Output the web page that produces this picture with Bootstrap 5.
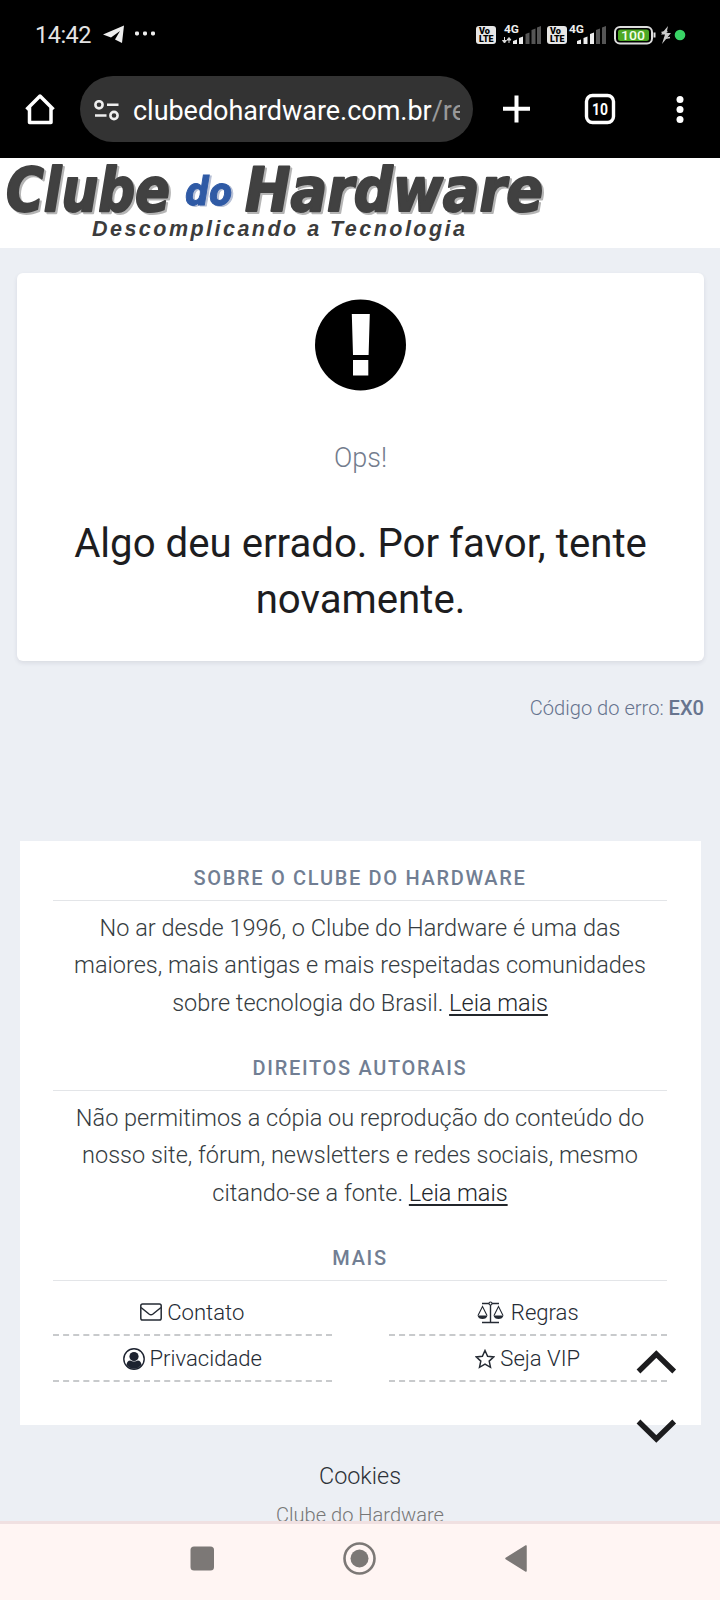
<!DOCTYPE html>
<html lang="pt-BR">
<head>
<meta charset="utf-8">
<meta name="viewport" content="width=device-width, initial-scale=1">
<title>Clube do Hardware</title>
<link href="https://cdn.jsdelivr.net/npm/bootstrap@5.3.0/dist/css/bootstrap.min.css" rel="stylesheet">
<style>
body{font-family:Roboto,"Liberation Sans",sans-serif;background:#eceff4;width:720px;height:1600px;overflow:hidden;color:#353c41}
svg{display:block;flex:none}
.chrome{height:158px;background:#000;color:#fff}
.status{height:68px;padding:0 33px 0 35px}
.clock{font-size:23.5px;line-height:68px;color:#e4e4e4;letter-spacing:-.5px;padding-top:1px}
.toolbar{height:84px;margin-top:-1px;padding:9px 0 9px 25px}
.omnibox{width:393px;height:66px;background:#333;border-radius:33px;margin-left:25px;padding:4px 13px 0 14px}
.address{width:327px;font-size:27px;white-space:nowrap;overflow:hidden;letter-spacing:-.03px}
.address small{font-size:inherit;color:#999}
.site-logo{height:90px}
.wordmark{filter:drop-shadow(2px 2px 0 #b5b5b5)}
.wordmark-do{filter:drop-shadow(2px 1.5px 0 #b6bfd5)}
.error-card{margin:25px 16px 0 17px;height:388px;border:0;border-radius:6px;box-shadow:0 2px 4px rgba(60,60,90,.11);padding-top:26px}
.ops{font-size:27px;line-height:36px;font-weight:300;color:#737c8d;margin-top:49px}
.message{font-size:40.2px;line-height:56px;font-weight:400;color:#1d1d1f;margin:40px 0 0;white-space:nowrap}
.code{font-size:20.1px;line-height:30px;font-weight:300;color:#66738e;margin:32px 16px 0 0}
.code b{font-weight:500;color:#68758f}
.about{margin:118px 19px 0 20px;height:584px;padding:22px 34px 0 33px}
.about h2{font-size:20px;line-height:30px;height:38px;font-weight:500;letter-spacing:1.68px;color:#717e93;border-bottom:1px solid #e3e5e8;margin:0 0 9px}
.about p{font-size:23.5px;line-height:37.3px;height:112px;font-weight:300;margin:0 0 31px;white-space:nowrap}
.about p a{color:#22262b;text-decoration-thickness:2px;text-underline-offset:3px}
.link-grid{grid-template-columns:1fr 1fr;column-gap:57px;margin-top:-1px}
.link-grid a{height:46.5px;padding-top:2px;font-size:22.1px;line-height:37px;font-weight:300;color:#252b34;border-bottom:2px dashed #c8cacc;text-decoration:none;gap:5px}
.cookies{font-size:23.4px;line-height:37px;font-weight:300;color:#2d3238;margin-top:33px}
.owner{font-size:20.1px;line-height:30px;font-weight:300;color:#777;margin-top:5px}
.scrollers{right:43px;top:1349px}
.sysnav{top:1521px;height:79px;background:#fff5f3;border-top:3px solid #f0e0e1}
</style>
</head>
<body class="position-relative">
<header class="chrome">
  <div class="status d-flex justify-content-between align-items-center">
    <div class="d-flex align-items-center">
      <span class="clock">14:42</span>
      <svg class="ms-2" width="56" height="24" viewBox="98 22 56 24"><path d="M102 34.500 123 25.500 121 43 114 39.500 119 31 110 37.500Z" fill="#eee"/><g fill="#eee"><rect x="134" y="31.500" width="4" height="4" rx="1.400"/><rect x="142" y="31.500" width="4" height="4" rx="1.400"/><rect x="150" y="31.500" width="4" height="4" rx="1.400"/></g></svg>
    </div>
    <svg width="212" height="26" viewBox="475 20 212 26" font-family="Roboto,sans-serif" font-weight="700">
      <g fill="#e6e6e6"><rect x="476" y="25" width="20" height="18" rx="3"/><rect x="547" y="25" width="20" height="18" rx="3"/></g>
      <g fill="#000" font-size="8.500" font-weight="900"><text x="479" y="33" textLength="11" lengthAdjust="spacingAndGlyphs">Vo</text><text x="479" y="41" textLength="14.500" lengthAdjust="spacingAndGlyphs">LTE</text><text x="550" y="33" textLength="11" lengthAdjust="spacingAndGlyphs">Vo</text><text x="550" y="41" textLength="14.500" lengthAdjust="spacingAndGlyphs">LTE</text></g>
      <g fill="#eee" font-size="11"><text x="504" y="31.500" textLength="15" lengthAdjust="spacingAndGlyphs">4G</text><text x="569" y="31.500" textLength="15" lengthAdjust="spacingAndGlyphs">4G</text></g>
      <path d="M504.500 36v4M502.500 39.500h4L504.500 42ZM509 37v5M507 39h4L509 36.500Z" stroke="#ddd" fill="#ddd"/>
      <g fill="#eee"><path d="M513 43v-3l4-1.500V43ZM519 43v-6l4-1.500V43ZM577 43v-3l4-1.500V43ZM583.500 43v-6l4-1.500V43ZM590 43V33l4-1.500V43Z"/></g>
      <path d="M525.500 43V33l4-1.500V43ZM531.500 43V29l4-1.500V43ZM537 43V26.500l4-1.500V43ZM596 43V29l4-1.500V43ZM602 43V26.500l4-1.500V43Z" fill="#555"/>
      <rect x="615" y="26" width="37" height="16.500" rx="5" fill="none" stroke="#ddd" stroke-width="2"/><rect x="618" y="28.500" width="31" height="11.500" rx="2.500" fill="#4ca824"/><rect x="653.500" y="31.500" width="2" height="5" fill="#ddd"/>
      <text x="621" y="39" font-size="13" fill="#f2ffe8" font-weight="500" textLength="24" lengthAdjust="spacingAndGlyphs">100</text>
      <path d="M668 25 661 33.500h4l-3 9.500 9-11h-4.500Z" fill="#ccc"/><path d="m661.500 31.500 6-1M664 37.500l6-1" stroke="#ccc" stroke-width="1.500"/>
      <circle cx="680" cy="34" r="5.300" fill="#39d465"/>
    </svg>
  </div>
  <div class="toolbar d-flex align-items-center">
    <svg width="30" height="32" viewBox="25 93.500 30 32" fill="none" stroke="#fff" stroke-width="3.500" stroke-linejoin="round"><path d="M26.500 110 40 96.500 53.500 110M29.500 107v16h21.500v-16"/></svg>
    <div class="omnibox d-flex align-items-center">
      <svg width="26" height="22" viewBox="94 100 26 22" fill="none" stroke="#eee" stroke-width="2.600"><circle cx="99" cy="104.800" r="3.600"/><path d="M107 104.800h11.500M95 115.500h11.500"/><circle cx="114" cy="115.500" r="3.600"/></svg>
      <span class="address ms-auto">clubedohardware.com.br<small>/re</small></span>
    </div>
    <svg width="200" height="40" viewBox="473 89.500 200 40"><path d="M503 109.300h27M516.500 96v27" stroke="#fff" stroke-width="4"/><rect x="586.500" y="96" width="27" height="27" rx="6" fill="none" stroke="#fff" stroke-width="3.400"/><text x="600" y="115.400" fill="#fff" font-size="16" font-weight="700" text-anchor="middle" textLength="16" lengthAdjust="spacingAndGlyphs">10</text></svg>
    <svg width="12" height="30" viewBox="0 -.5 12 30"><g fill="#fff"><circle cx="7" cy="5" r="3.500"/><circle cx="7" cy="15" r="3.500"/><circle cx="7" cy="25" r="3.500"/></g></svg>
  </div>
</header>
<div class="site-logo bg-white">
  <svg width="560" height="90" viewBox="0 158 560 90" font-style="italic" font-weight="700">
    <g font-family="'DejaVu Sans Condensed','DejaVu Sans',sans-serif" font-stretch="condensed">
      <g class="wordmark" font-size="61" fill="#414141" stroke="#414141" stroke-width="2" stroke-linejoin="round"><text x="6" y="211" textLength="164" lengthAdjust="spacingAndGlyphs">Clube</text><text x="245" y="211" textLength="298" lengthAdjust="spacingAndGlyphs">Hardware</text></g>
      <text class="wordmark-do" x="185" y="205" font-size="39" fill="#2f5aa5" stroke="#2f5aa5" textLength="47" lengthAdjust="spacingAndGlyphs">do</text>
    </g>
    <text x="92" y="236" font-family="'Liberation Sans',sans-serif" font-size="21.500" fill="#3c3c3c" textLength="373">Descomplicando a Tecnologia</text>
  </svg>
</div>
<main>
  <section class="card error-card align-items-center text-center">
    <svg width="92" height="92" viewBox="0 0 92 92"><circle cx="45.500" cy="46" r="45.500"/><path d="M36.800 15h18l-1.200 41H38ZM38 61h15.300v15.500H38Z" fill="#fff"/></svg>
    <div class="ops">Ops!</div>
    <h1 class="message">Algo deu errado. Por favor, tente<br>novamente.</h1>
  </section>
  <div class="code text-end">Código do erro: <b>EX0</b></div>
</main>
<footer class="text-center">
  <section class="about bg-white">
    <h2 class="mt-0">SOBRE O CLUBE DO HARDWARE</h2>
    <p>No ar desde 1996, o Clube do Hardware é uma das<br>maiores, mais antigas e mais respeitadas comunidades<br>sobre tecnologia do Brasil. <a href="#">Leia mais</a></p>
    <h2>DIREITOS AUTORAIS</h2>
    <p>Não permitimos a cópia ou reprodução do conteúdo do<br>nosso site, fórum, newsletters e redes sociais, mesmo<br>citando-se a fonte. <a href="#">Leia mais</a></p>
    <h2>MAIS</h2>
    <nav class="link-grid d-grid">
      <a class="d-flex justify-content-center align-items-center" href="#"><svg width="22" height="18" viewBox="0 0 22 18" fill="none" stroke="#252b34" stroke-width="1.500"><rect x=".8" y="1" width="20.400" height="16" rx="1.800"/><path d="M1 4.500 9 11q2 1.500 4 0l8-6.500"/></svg>Contato</a>
      <a class="d-flex justify-content-center align-items-center" href="#"><svg width="29" height="23" viewBox="0 0 29 23" fill="none" stroke="#252b34" stroke-width="1.100"><path d="M5 2.500h17M5 21.500h17" stroke-width="1.600"/><path d="M13.500 2v19" stroke-width="1.400"/><circle cx="13.500" cy="2.500" r="1.500" fill="#fff"/><path d="M1 14.500 5.500 5.500l4.500 9M17 14.500l4.500-9 4.500 9"/><path d="M.5 14.500h10q-1 3.500-5 3.500t-5-3.500ZM16.500 14.500h10q-1 3.500-5 3.500t-5-3.500Z" fill="#252b34" stroke="none"/></svg>Regras</a>
      <a class="d-flex justify-content-center align-items-center" href="#"><svg width="22" height="22" viewBox="0 0 22 22"><circle cx="11" cy="11" r="10.200" fill="none" stroke="#1d2330" stroke-width="1.400"/><circle cx="11" cy="8.500" r="4.600" fill="#1d2330"/><path d="M3.500 17Q4 12.500 7.200 12.500q3.800 2.200 7.600 0 3.200 0 3.700 4.500-3 3.700-7.500 3.700T3.500 17Z" fill="#1d2330"/></svg>Privacidade</a>
      <a class="d-flex justify-content-center align-items-center" href="#"><svg width="20" height="20" viewBox="0 0 20 20" fill="none" stroke="#252b34" stroke-width="1.500"><path d="m10 1.500 2.600 5.700 6.200.7-4.600 4.200 1.300 6.200L10 15.200l-5.500 3.100 1.300-6.200L1.200 7.900l6.200-.7Z"/></svg>Seja VIP</a>
    </nav>
  </section>
  <div class="cookies">Cookies</div>
  <div class="owner">Clube do Hardware</div>
</footer>
<div class="scrollers position-absolute">
  <svg width="41" height="96" viewBox="636 1349 41 96" fill="none" stroke="#1c1c1e" stroke-width="5.400"><path d="M638.500 1371.500 656.300 1354 674.200 1371.500M638.500 1421.500 656.300 1439 674.200 1421.500"/></svg>
</div>
<nav class="sysnav position-absolute start-0 w-100">
  <svg width="720" height="76" viewBox="0 1524 720 76" fill="#7c7876"><rect x="190.500" y="1546.500" width="23.500" height="24" rx="3.500"/><circle cx="359.500" cy="1558.500" r="15" fill="none" stroke="#7c7876" stroke-width="2.600"/><circle cx="359.500" cy="1558.500" r="9"/><path d="M506 1558.500 526 1546v25Z" stroke="#7c7876" stroke-width="1.500" stroke-linejoin="round"/></svg>
</nav>
<script src="https://cdn.jsdelivr.net/npm/bootstrap@5.3.0/dist/js/bootstrap.bundle.min.js"></script>
</body>
</html>
